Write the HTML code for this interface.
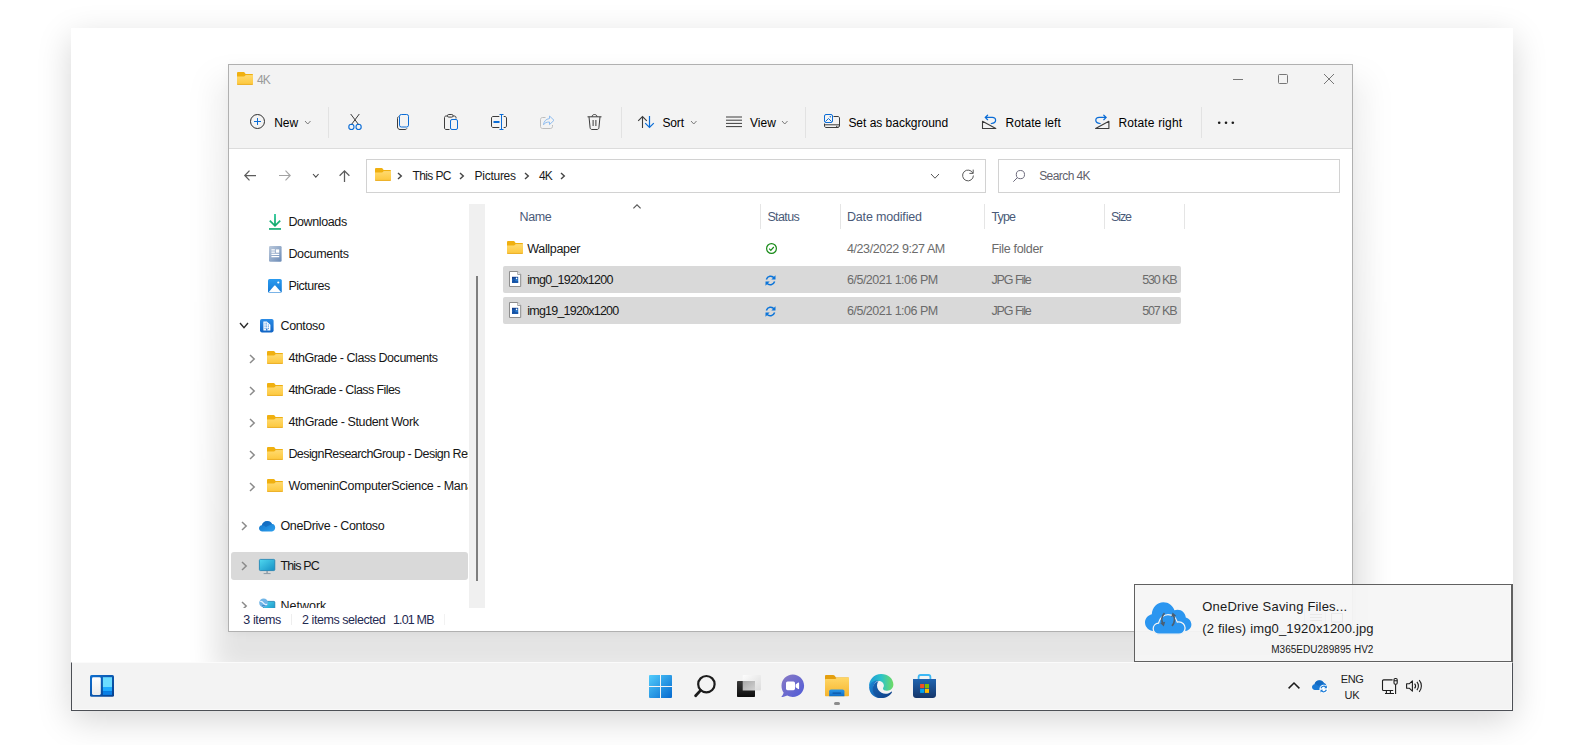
<!DOCTYPE html>
<html lang="en"><head><meta charset="utf-8"><title>4K - File Explorer</title>
<style>
html,body{margin:0;padding:0;background:#fff;}
body{width:1580px;height:745px;position:relative;overflow:hidden;font-family:"Liberation Sans",sans-serif;}
.t{position:absolute;white-space:pre;}
svg{overflow:visible}
</style></head><body>
<div style="position:absolute;left:71px;top:28px;width:1442px;height:682px;background:#fff;box-shadow:0 10px 32px rgba(0,0,0,0.17);"></div>
<div style="position:absolute;left:108px;top:0;width:1365px;height:745px;-webkit-mask-image:linear-gradient(to bottom,rgba(0,0,0,0.5) 64px,#000 540px);mask-image:linear-gradient(to bottom,rgba(0,0,0,0.5) 64px,#000 540px);"><div style="position:absolute;left:120px;top:64px;width:1125px;height:568px;box-shadow:0 28px 26px 14px rgba(0,0,0,0.11), 0 0 12px rgba(0,0,0,0.06);"></div></div>
<div style="position:absolute;left:228px;top:64px;width:1125px;height:568px;background:#fff;"></div>
<div style="position:absolute;left:228px;top:64px;width:1125px;height:568px;box-sizing:border-box;border:1px solid #b0b0b0;z-index:5;pointer-events:none;"></div>
<div style="position:absolute;left:229px;top:65px;width:1123px;height:83px;background:#f3f3f3;"></div>
<div style="position:absolute;left:229px;top:148px;width:1123px;height:1px;background:#dcdcdc;"></div>
<svg style="position:absolute;left:237px;top:72px;" width="16" height="13" viewBox="0 0 16 13"><defs><linearGradient id="gf1" x1="0" y1="0" x2="0" y2="1"><stop offset="0" stop-color="#ffe79c"/><stop offset=".1" stop-color="#ffd869"/><stop offset=".84" stop-color="#fdca43"/><stop offset=".9" stop-color="#edb22b"/><stop offset="1" stop-color="#edb22b"/></linearGradient></defs><path d="M1.200 0H6.600c.5 0 .9.300 1.200.7L8.600 2.100H15c.6 0 1 .4 1 1V7H0V1.200C0 .5.500 0 1.200 0z" fill="#f0b010"/><path d="M0 4.400H6.800c.5 0 .9-.2 1.200-.5l.3-.3c.3-.3.700-.4 1.100-.4H16V12c0 .6-.4 1-1 1H1c-.6 0-1-.4-1-1z" fill="url(#gf1)"/></svg>
<span class="t" style="left:257px;top:73.00px;font-size:12px;line-height:14px;color:#9a9a9a;font-weight:400;letter-spacing:-0.84px;">4K</span>
<svg style="position:absolute;left:1233px;top:79px;" width="10" height="1" viewBox="0 0 10 1"><rect width="10" height="1" fill="#777"/></svg>
<svg style="position:absolute;left:1278px;top:74px;" width="10" height="10" viewBox="0 0 10 10"><rect x=".5" y=".5" width="9" height="9" rx="1" fill="none" stroke="#777"/></svg>
<svg style="position:absolute;left:1324px;top:74px;" width="10" height="10" viewBox="0 0 10 10"><path d="M0 0L10 10M10 0L0 10" stroke="#777" stroke-width="1" fill="none"/></svg>
<svg style="position:absolute;left:250px;top:114px;" width="15" height="15" viewBox="0 0 15 15"><circle cx="7.5" cy="7.5" r="7" fill="none" stroke="#2e2e2e" stroke-width="1"/><path d="M4 7.5h7M7.5 4v7" stroke="#0a6cd6" stroke-width="1" fill="none"/></svg>
<span class="t" style="left:274.3px;top:116.00px;font-size:12px;line-height:14px;color:#000;font-weight:400;letter-spacing:-0.11px;">New</span>
<svg style="position:absolute;left:305.25px;top:120.5px;" width="5.5" height="3" viewBox="0 0 5.5 3"><path d="M0 0L2.75 3L5.5 0" fill="none" stroke="#7a7a7a" stroke-width="1"/></svg>
<div style="position:absolute;left:328px;top:107px;width:1px;height:31px;background:#e2e2e2;"></div>
<svg style="position:absolute;left:348px;top:114px;" width="14" height="16" viewBox="0 0 14 16"><path d="M2.700 0L10.900 11M11.300 0L3.100 11" stroke="#3c3c3c" stroke-width="1" fill="none"/><circle cx="3.400" cy="12.900" r="2.600" fill="none" stroke="#0a6cd6" stroke-width="1.100"/><circle cx="10.600" cy="12.900" r="2.600" fill="none" stroke="#0a6cd6" stroke-width="1.100"/></svg>
<svg style="position:absolute;left:397px;top:114px;" width="12" height="16" viewBox="0 0 12 16"><path d="M1.6 2.6C.9 2.9.5 3.500.5 4.300V13c0 1.400 1.100 2.500 2.500 2.500H8.200c.8 0 1.400-.4 1.700-1.100" fill="none" stroke="#3c3c3c" stroke-width="1"/><rect x="2.500" y=".5" width="9" height="12.500" rx="1.800" fill="none" stroke="#0a6cd6" stroke-width="1"/></svg>
<svg style="position:absolute;left:444px;top:114px;" width="14" height="16" viewBox="0 0 14 16"><path d="M5.500 15.500H2c-.8 0-1.500-.7-1.500-1.500V3.500C.5 2.700 1.200 2 2 2h1.500M9 2h1.500c.8 0 1.500.7 1.500 1.500V4.500" fill="none" stroke="#3c3c3c" stroke-width="1"/><rect x="3.500" y=".5" width="5.500" height="2.600" rx="1.200" fill="none" stroke="#3c3c3c" stroke-width="1"/><rect x="6.500" y="5.500" width="7" height="10" rx="1.500" fill="none" stroke="#0a6cd6" stroke-width="1"/></svg>
<svg style="position:absolute;left:491px;top:114px;" width="16" height="16" viewBox="0 0 16 16"><path d="M8.300 2.500H2C1.200 2.500.5 3.200.5 4v8c0 .8.700 1.500 1.500 1.500h6.300M12.700 2.500H14c.8 0 1.500.7 1.500 1.500v8c0 .8-.7 1.500-1.500 1.500h-1.300" fill="none" stroke="#3c3c3c" stroke-width="1"/><path d="M8.500.5h4M8.500 15.500h4M10.500.5v15" stroke="#0a6cd6" stroke-width="1" fill="none"/><rect x="2.500" y="7" width="6" height="2" fill="#0a6cd6"/></svg>
<svg style="position:absolute;left:540px;top:115px;" width="15" height="14" viewBox="0 0 15 14"><path d="M5.500 2.500H2.500C1.400 2.500.5 3.400.5 4.500v7c0 1.100.9 2 2 2h8c1.100 0 2-.9 2-2v-1.500" fill="none" stroke="#bdbdbd" stroke-width="1"/><path d="M9.500 1L14 5.300 9.500 9.600V7C6.500 7 4.800 7.800 3.500 9.800 3.900 6.300 5.800 4 9.500 3.600z" fill="none" stroke="#8fbdf0" stroke-width="1" stroke-linejoin="round"/></svg>
<svg style="position:absolute;left:587px;top:114px;" width="15" height="16" viewBox="0 0 15 16"><path d="M.5 2.800h14M5 2.800C5 1.500 6 .5 7.500.5S10 1.500 10 2.800M2 2.800l1.100 11c.1.900.8 1.700 1.800 1.700h5.200c1 0 1.700-.8 1.800-1.700L13 2.800M6.100 6v6M8.900 6v6" fill="none" stroke="#3c3c3c" stroke-width="1"/></svg>
<div style="position:absolute;left:621px;top:107px;width:1px;height:31px;background:#e2e2e2;"></div>
<svg style="position:absolute;left:637px;top:116px;" width="18" height="13" viewBox="0 0 18 13"><path d="M5.500 12V.5M1.200 4.800L5.500 .5l4.300 4.300" fill="none" stroke="#3c3c3c" stroke-width="1.100"/><path d="M12.500 0v11.500M8.200 7.200l4.300 4.300 4.300-4.300" fill="none" stroke="#0a6cd6" stroke-width="1.200"/></svg>
<span class="t" style="left:662.4px;top:116.00px;font-size:12px;line-height:14px;color:#000;font-weight:400;letter-spacing:-0.1px;">Sort</span>
<svg style="position:absolute;left:691.45px;top:120.5px;" width="5.5" height="3" viewBox="0 0 5.5 3"><path d="M0 0L2.75 3L5.5 0" fill="none" stroke="#7a7a7a" stroke-width="1"/></svg>
<svg style="position:absolute;left:726px;top:116px;" width="16" height="12" viewBox="0 0 16 12"><path d="M0 1h16M0 4.200h16M0 7.400h16M0 10.600h16" stroke="#3c3c3c" stroke-width="1" fill="none"/></svg>
<span class="t" style="left:750px;top:116.00px;font-size:12px;line-height:14px;color:#000;font-weight:400;letter-spacing:0.0px;">View</span>
<svg style="position:absolute;left:782.45px;top:120.5px;" width="5.5" height="3" viewBox="0 0 5.5 3"><path d="M0 0L2.75 3L5.5 0" fill="none" stroke="#7a7a7a" stroke-width="1"/></svg>
<div style="position:absolute;left:805px;top:107px;width:1px;height:31px;background:#e2e2e2;"></div>
<svg style="position:absolute;left:824px;top:114px;" width="16" height="14" viewBox="0 0 16 14"><path d="M9.500 2.500H14c.8 0 1.500.7 1.500 1.500v8c0 .8-.7 1.500-1.500 1.500H2c-.8 0-1.500-.7-1.500-1.500V9.500M.5 10.800h15" fill="none" stroke="#3c3c3c" stroke-width="1"/><rect x=".5" y=".5" width="8" height="8" rx="1.500" fill="none" stroke="#0a6cd6" stroke-width="1"/><path d="M1.500 7.500L4.500 4.500l3 3" fill="none" stroke="#0a6cd6" stroke-width="1"/><circle cx="6.300" cy="2.700" r=".7" fill="#0a6cd6"/><rect x="12" y="11.800" width="1" height="1" fill="#3c3c3c"/><rect x="13.600" y="11.800" width="1" height="1" fill="#3c3c3c"/></svg>
<span class="t" style="left:848.4px;top:116.00px;font-size:12px;line-height:14px;color:#000;font-weight:400;letter-spacing:-0.02px;">Set as background</span>
<svg style="position:absolute;left:982px;top:115px;" width="15" height="14" viewBox="0 0 15 14"><path d="M.5 13.500V6.300L13.800 13.500z" fill="none" stroke="#3c3c3c" stroke-width="1.100" stroke-linejoin="round"/><path d="M5.600 .2L3.200 2.400l2.400 2.300M3.200 2.400h7c2 0 3.400 1.300 3.400 2.900 0 1.700-1.800 3-4.300 3.200" fill="none" stroke="#0a6cd6" stroke-width="1.250" stroke-linecap="round" stroke-linejoin="round"/></svg>
<span class="t" style="left:1005.6px;top:116.00px;font-size:12px;line-height:14px;color:#000;font-weight:400;letter-spacing:0.05px;">Rotate left</span>
<svg style="position:absolute;left:1094px;top:115px;" width="15" height="14" viewBox="0 0 15 14"><g transform="translate(15.400,0) scale(-1,1)"><path d="M.5 13.500V6.300L13.800 13.500z" fill="none" stroke="#3c3c3c" stroke-width="1.100" stroke-linejoin="round"/><path d="M5.600 .2L3.200 2.400l2.400 2.300M3.200 2.400h7c2 0 3.400 1.300 3.400 2.900 0 1.700-1.800 3-4.300 3.200" fill="none" stroke="#0a6cd6" stroke-width="1.250" stroke-linecap="round" stroke-linejoin="round"/></g></svg>
<span class="t" style="left:1118.4px;top:116.00px;font-size:12px;line-height:14px;color:#000;font-weight:400;letter-spacing:0.15px;">Rotate right</span>
<div style="position:absolute;left:1201px;top:107px;width:1px;height:31px;background:#e2e2e2;"></div>
<svg style="position:absolute;left:1217px;top:121px;" width="18" height="4" viewBox="0 0 18 4"><circle cx="2.200" cy="1.800" r="1.300" fill="#1a1a1a"/><circle cx="9" cy="1.800" r="1.300" fill="#1a1a1a"/><circle cx="15.800" cy="1.800" r="1.300" fill="#1a1a1a"/></svg>
<svg style="position:absolute;left:244px;top:170px;" width="12" height="11" viewBox="0 0 12 11"><path d="M12 5.500H1M5.500 .6L.8 5.500l4.700 4.900" fill="none" stroke="#5c5c5c" stroke-width="1.250"/></svg>
<svg style="position:absolute;left:279px;top:170px;" width="12" height="11" viewBox="0 0 12 11"><path d="M0 5.500h11M6.500 .6l4.700 4.900-4.700 4.900" fill="none" stroke="#a3a3a3" stroke-width="1.100"/></svg>
<svg style="position:absolute;left:312.7px;top:173.9px;" width="5.6" height="3.2" viewBox="0 0 5.6 3.2"><path d="M0 0L2.8 3.2L5.6 0" fill="none" stroke="#4a4a4a" stroke-width="1.1"/></svg>
<svg style="position:absolute;left:339px;top:170px;" width="11" height="12" viewBox="0 0 11 12"><path d="M5.500 12V1M.6 5.800L5.500 .9l4.900 4.900" fill="none" stroke="#5c5c5c" stroke-width="1.250"/></svg>
<div style="position:absolute;left:366px;top:159px;width:620px;height:34px;box-sizing:border-box;border:1px solid #d2d2d2;background:#fff;"></div>
<svg style="position:absolute;left:375px;top:168px;" width="16" height="13" viewBox="0 0 16 13"><defs><linearGradient id="gf2" x1="0" y1="0" x2="0" y2="1"><stop offset="0" stop-color="#ffe79c"/><stop offset=".1" stop-color="#ffd869"/><stop offset=".84" stop-color="#fdca43"/><stop offset=".9" stop-color="#edb22b"/><stop offset="1" stop-color="#edb22b"/></linearGradient></defs><path d="M1.200 0H6.600c.5 0 .9.300 1.200.7L8.600 2.100H15c.6 0 1 .4 1 1V7H0V1.200C0 .5.500 0 1.200 0z" fill="#f0b010"/><path d="M0 4.400H6.800c.5 0 .9-.2 1.200-.5l.3-.3c.3-.3.700-.4 1.100-.4H16V12c0 .6-.4 1-1 1H1c-.6 0-1-.4-1-1z" fill="url(#gf2)"/></svg>
<svg style="position:absolute;left:398.35px;top:173.4px;" width="3.3" height="6" viewBox="0 0 3.3 6"><path d="M0 0L3.3 3.0L0 6" fill="none" stroke="#444" stroke-width="1.4"/></svg>
<span class="t" style="left:412.6px;top:169.00px;font-size:12px;line-height:14px;color:#1a1a1a;font-weight:400;letter-spacing:-0.64px;">This PC</span>
<svg style="position:absolute;left:460.35px;top:173.4px;" width="3.3" height="6" viewBox="0 0 3.3 6"><path d="M0 0L3.3 3.0L0 6" fill="none" stroke="#444" stroke-width="1.4"/></svg>
<span class="t" style="left:474.5px;top:169.00px;font-size:12px;line-height:14px;color:#1a1a1a;font-weight:400;letter-spacing:-0.26px;">Pictures</span>
<svg style="position:absolute;left:525.45px;top:173.4px;" width="3.3" height="6" viewBox="0 0 3.3 6"><path d="M0 0L3.3 3.0L0 6" fill="none" stroke="#444" stroke-width="1.4"/></svg>
<span class="t" style="left:539px;top:169.00px;font-size:12px;line-height:14px;color:#1a1a1a;font-weight:400;letter-spacing:-0.84px;">4K</span>
<svg style="position:absolute;left:561.35px;top:173.4px;" width="3.3" height="6" viewBox="0 0 3.3 6"><path d="M0 0L3.3 3.0L0 6" fill="none" stroke="#444" stroke-width="1.4"/></svg>
<svg style="position:absolute;left:931.0px;top:173.5px;" width="8" height="4.2" viewBox="0 0 8 4.2"><path d="M0 0L4.0 4.2L8 0" fill="none" stroke="#555" stroke-width="1"/></svg>
<svg style="position:absolute;left:962px;top:169px;" width="12" height="12" viewBox="0 0 12 12"><path d="M10.900 4.200A5.400 5.400 0 1 0 11.400 6.500" fill="none" stroke="#5c5c5c" stroke-width="1"/><path d="M11.200 .6v3.800H7.400" fill="none" stroke="#5c5c5c" stroke-width="1"/></svg>
<div style="position:absolute;left:998px;top:159px;width:342px;height:34px;box-sizing:border-box;border:1px solid #d2d2d2;background:#fff;"></div>
<svg style="position:absolute;left:1013px;top:170px;" width="12" height="12" viewBox="0 0 12 12"><circle cx="7.400" cy="4.600" r="4.100" fill="none" stroke="#6c6a7c" stroke-width="1"/><path d="M4.500 7.500L.3 11.700" stroke="#6c6a7c" stroke-width="1"/></svg>
<span class="t" style="left:1039.2px;top:169.00px;font-size:12px;line-height:14px;color:#5f5f6b;font-weight:400;letter-spacing:-0.58px;">Search 4K</span>
<div style="position:absolute;left:231px;top:552px;width:237px;height:28px;background:#d9d9d9;border-radius:3px;"></div>
<div style="position:absolute;left:0;top:0;width:467.600px;height:607.5px;overflow:hidden;">
<svg style="position:absolute;left:269px;top:214px;" width="12" height="16" viewBox="0 0 12 16"><defs><linearGradient id="gdl" x1="0" y1="0" x2="0" y2="1"><stop offset="0" stop-color="#2bc79a"/><stop offset="1" stop-color="#13a86b"/></linearGradient></defs><path d="M6 0v11.600M.8 6.600L6 11.800l5.200-5.200" fill="none" stroke="url(#gdl)" stroke-width="1.800"/><rect x="0" y="14.100" width="12" height="1.700" fill="#17ad75"/></svg>
<span class="t" style="left:288.4px;top:215.00px;font-size:12.5px;line-height:14px;color:#161616;font-weight:400;letter-spacing:-0.38px;">Downloads</span>
<svg style="position:absolute;left:268.6px;top:246px;" width="13" height="16" viewBox="0 0 13 16"><defs><linearGradient id="gdoc" x1="0" y1="0" x2="1" y2="1"><stop offset="0" stop-color="#bccadc"/><stop offset="1" stop-color="#6a8ab6"/></linearGradient></defs><rect x="0" y="0" width="12.600" height="15.700" rx="1.200" fill="url(#gdoc)"/><rect x="6.900" y="3.400" width="3.300" height="3.300" fill="#fff"/><path d="M2.400 3.900h3.500M2.400 6.100h3.500M2.400 8.400h7.800M2.400 10.600h7.800" stroke="#fff" stroke-width="1.100"/></svg>
<span class="t" style="left:288.4px;top:247.00px;font-size:12.5px;line-height:14px;color:#161616;font-weight:400;letter-spacing:-0.34px;">Documents</span>
<svg style="position:absolute;left:268px;top:279.2px;" width="14" height="14" viewBox="0 0 14 14"><defs><linearGradient id="gpic" x1="0" y1="0" x2="0" y2="1"><stop offset="0" stop-color="#2a9bf0"/><stop offset="1" stop-color="#1479d4"/></linearGradient></defs><rect width="13.800" height="13.800" rx="1.600" fill="url(#gpic)"/><path d="M.6 13.200L6.200 6.800c.4-.4.900-.4 1.300 0l5.700 6.400z" fill="#fff"/><circle cx="10.300" cy="3.500" r="1.100" fill="#fff"/></svg>
<span class="t" style="left:288.4px;top:279.00px;font-size:12.5px;line-height:14px;color:#161616;font-weight:400;letter-spacing:-0.48px;">Pictures</span>
<svg style="position:absolute;left:239.8px;top:323.4px;" width="8" height="4.6" viewBox="0 0 8 4.6"><path d="M0 0L4.0 4.6L8 0" fill="none" stroke="#2b2b2b" stroke-width="1.4"/></svg>
<svg style="position:absolute;left:260.2px;top:319.3px;" width="14" height="14" viewBox="0 0 14 14"><defs><linearGradient id="gcon" x1="0" y1="0" x2="0" y2="1"><stop offset="0" stop-color="#2b8ce6"/><stop offset="1" stop-color="#0f63c4"/></linearGradient></defs><rect width="13.600" height="13.400" rx="1.800" fill="url(#gcon)"/><path d="M3.400 11.600V2.400h3.400l3.600 3.400v5.800z" fill="#fff"/><path d="M4.600 4.200h.9M6.200 4.200h.9M4.600 6h.9M6.200 6h.9M7.900 6h.9M4.600 7.800h.9M6.200 7.800h.9M7.900 7.800h.9M4.600 9.600h.9M7.900 9.600h.9" stroke="#1a74d6" stroke-width=".9"/><rect x="6.100" y="9.400" width="1.300" height="2.200" fill="#1a74d6"/></svg>
<span class="t" style="left:280.5px;top:319.00px;font-size:12.5px;line-height:14px;color:#161616;font-weight:400;letter-spacing:-0.37px;">Contoso</span>
<svg style="position:absolute;left:249.70000000000002px;top:354.5px;" width="4.2" height="8" viewBox="0 0 4.2 8"><path d="M0 0L4.2 4.0L0 8" fill="none" stroke="#8a8a8a" stroke-width="1.5"/></svg>
<svg style="position:absolute;left:267px;top:351.2px;" width="16" height="13" viewBox="0 0 16 13"><defs><linearGradient id="gf3" x1="0" y1="0" x2="0" y2="1"><stop offset="0" stop-color="#ffe79c"/><stop offset=".1" stop-color="#ffd869"/><stop offset=".84" stop-color="#fdca43"/><stop offset=".9" stop-color="#edb22b"/><stop offset="1" stop-color="#edb22b"/></linearGradient></defs><path d="M1.200 0H6.600c.5 0 .9.300 1.200.7L8.600 2.100H15c.6 0 1 .4 1 1V7H0V1.200C0 .5.500 0 1.200 0z" fill="#f0b010"/><path d="M0 4.400H6.800c.5 0 .9-.2 1.200-.5l.3-.3c.3-.3.700-.4 1.100-.4H16V12c0 .6-.4 1-1 1H1c-.6 0-1-.4-1-1z" fill="url(#gf3)"/></svg>
<span class="t" style="left:288.4px;top:351.00px;font-size:12.5px;line-height:14px;color:#161616;font-weight:400;letter-spacing:-0.46px;">4thGrade - Class Documents</span>
<svg style="position:absolute;left:249.70000000000002px;top:386.5px;" width="4.2" height="8" viewBox="0 0 4.2 8"><path d="M0 0L4.2 4.0L0 8" fill="none" stroke="#8a8a8a" stroke-width="1.5"/></svg>
<svg style="position:absolute;left:267px;top:383.2px;" width="16" height="13" viewBox="0 0 16 13"><defs><linearGradient id="gf4" x1="0" y1="0" x2="0" y2="1"><stop offset="0" stop-color="#ffe79c"/><stop offset=".1" stop-color="#ffd869"/><stop offset=".84" stop-color="#fdca43"/><stop offset=".9" stop-color="#edb22b"/><stop offset="1" stop-color="#edb22b"/></linearGradient></defs><path d="M1.200 0H6.600c.5 0 .9.300 1.200.7L8.600 2.100H15c.6 0 1 .4 1 1V7H0V1.200C0 .5.500 0 1.200 0z" fill="#f0b010"/><path d="M0 4.400H6.800c.5 0 .9-.2 1.200-.5l.3-.3c.3-.3.700-.4 1.100-.4H16V12c0 .6-.4 1-1 1H1c-.6 0-1-.4-1-1z" fill="url(#gf4)"/></svg>
<span class="t" style="left:288.4px;top:383.00px;font-size:12.5px;line-height:14px;color:#161616;font-weight:400;letter-spacing:-0.58px;">4thGrade - Class Files</span>
<svg style="position:absolute;left:249.70000000000002px;top:418.5px;" width="4.2" height="8" viewBox="0 0 4.2 8"><path d="M0 0L4.2 4.0L0 8" fill="none" stroke="#8a8a8a" stroke-width="1.5"/></svg>
<svg style="position:absolute;left:267px;top:415.2px;" width="16" height="13" viewBox="0 0 16 13"><defs><linearGradient id="gf5" x1="0" y1="0" x2="0" y2="1"><stop offset="0" stop-color="#ffe79c"/><stop offset=".1" stop-color="#ffd869"/><stop offset=".84" stop-color="#fdca43"/><stop offset=".9" stop-color="#edb22b"/><stop offset="1" stop-color="#edb22b"/></linearGradient></defs><path d="M1.200 0H6.600c.5 0 .9.300 1.200.7L8.600 2.100H15c.6 0 1 .4 1 1V7H0V1.200C0 .5.500 0 1.200 0z" fill="#f0b010"/><path d="M0 4.400H6.800c.5 0 .9-.2 1.200-.5l.3-.3c.3-.3.700-.4 1.100-.4H16V12c0 .6-.4 1-1 1H1c-.6 0-1-.4-1-1z" fill="url(#gf5)"/></svg>
<span class="t" style="left:288.4px;top:415.00px;font-size:12.5px;line-height:14px;color:#161616;font-weight:400;letter-spacing:-0.37px;">4thGrade - Student Work</span>
<svg style="position:absolute;left:249.70000000000002px;top:450.5px;" width="4.2" height="8" viewBox="0 0 4.2 8"><path d="M0 0L4.2 4.0L0 8" fill="none" stroke="#8a8a8a" stroke-width="1.5"/></svg>
<svg style="position:absolute;left:267px;top:447.2px;" width="16" height="13" viewBox="0 0 16 13"><defs><linearGradient id="gf6" x1="0" y1="0" x2="0" y2="1"><stop offset="0" stop-color="#ffe79c"/><stop offset=".1" stop-color="#ffd869"/><stop offset=".84" stop-color="#fdca43"/><stop offset=".9" stop-color="#edb22b"/><stop offset="1" stop-color="#edb22b"/></linearGradient></defs><path d="M1.200 0H6.600c.5 0 .9.300 1.200.7L8.600 2.100H15c.6 0 1 .4 1 1V7H0V1.200C0 .5.500 0 1.200 0z" fill="#f0b010"/><path d="M0 4.400H6.800c.5 0 .9-.2 1.200-.5l.3-.3c.3-.3.700-.4 1.100-.4H16V12c0 .6-.4 1-1 1H1c-.6 0-1-.4-1-1z" fill="url(#gf6)"/></svg>
<span class="t" style="left:288.4px;top:447.00px;font-size:12.5px;line-height:14px;color:#161616;font-weight:400;letter-spacing:-0.57px;">DesignResearchGroup - Design Research</span>
<svg style="position:absolute;left:249.70000000000002px;top:482.5px;" width="4.2" height="8" viewBox="0 0 4.2 8"><path d="M0 0L4.2 4.0L0 8" fill="none" stroke="#8a8a8a" stroke-width="1.5"/></svg>
<svg style="position:absolute;left:267px;top:479.2px;" width="16" height="13" viewBox="0 0 16 13"><defs><linearGradient id="gf7" x1="0" y1="0" x2="0" y2="1"><stop offset="0" stop-color="#ffe79c"/><stop offset=".1" stop-color="#ffd869"/><stop offset=".84" stop-color="#fdca43"/><stop offset=".9" stop-color="#edb22b"/><stop offset="1" stop-color="#edb22b"/></linearGradient></defs><path d="M1.200 0H6.600c.5 0 .9.300 1.200.7L8.600 2.100H15c.6 0 1 .4 1 1V7H0V1.200C0 .5.500 0 1.200 0z" fill="#f0b010"/><path d="M0 4.400H6.800c.5 0 .9-.2 1.200-.5l.3-.3c.3-.3.700-.4 1.100-.4H16V12c0 .6-.4 1-1 1H1c-.6 0-1-.4-1-1z" fill="url(#gf7)"/></svg>
<span class="t" style="left:288.4px;top:479.00px;font-size:12.5px;line-height:14px;color:#161616;font-weight:400;letter-spacing:-0.31px;">WomeninComputerScience - Management</span>
<svg style="position:absolute;left:241.70000000000002px;top:522.3000000000001px;" width="4.2" height="8" viewBox="0 0 4.2 8"><path d="M0 0L4.2 4.0L0 8" fill="none" stroke="#8a8a8a" stroke-width="1.5"/></svg>
<svg style="position:absolute;left:258.8px;top:520.6px;" width="16.2" height="10.6" viewBox="0 0 16.2 10.6"><defs><linearGradient id="god" x1="0" y1="0" x2="1" y2="1"><stop offset="0" stop-color="#1272c8"/><stop offset="1" stop-color="#2da0ee"/></linearGradient></defs><path d="M3.400 10.500C1.500 10.500 0 9.100 0 7.300 0 5.700 1.200 4.400 2.800 4.200 3.500 1.800 5.600 0 8.200 0c2.200 0 4 1.200 4.900 3 .1 0 .200 0 .3 0 1.600 0 2.800 1.500 2.800 3.600 0 2.200-1.400 3.900-3.200 3.900z" fill="url(#god)"/><path d="M2.800 4.200C4.500 4 6 4.800 6.900 6.100L13.100 3c-.9-1.800-2.700-3-4.900-3C5.600 0 3.500 1.800 2.800 4.200z" fill="#0f5fb4" opacity=".55"/></svg>
<span class="t" style="left:280.5px;top:519.00px;font-size:12.5px;line-height:14px;color:#161616;font-weight:400;letter-spacing:-0.37px;">OneDrive - Contoso</span>
<svg style="position:absolute;left:241.70000000000002px;top:562.3000000000001px;" width="4.2" height="8" viewBox="0 0 4.2 8"><path d="M0 0L4.2 4.0L0 8" fill="none" stroke="#8a8a8a" stroke-width="1.5"/></svg>
<svg style="position:absolute;left:258.8px;top:558.7px;" width="16.2" height="15.2" viewBox="0 0 16.2 15.2"><defs><linearGradient id="gpc" x1="0" y1="0" x2="1" y2="1"><stop offset="0" stop-color="#4fd8f0"/><stop offset="1" stop-color="#158fc4"/></linearGradient></defs><rect x=".4" y=".4" width="15.400" height="11.200" rx="1" fill="url(#gpc)" stroke="#1a7eae" stroke-width=".8"/><rect x="7.400" y="12" width="1.400" height="2.200" fill="#8c9aa6"/><rect x="4.600" y="14.100" width="7" height="1" fill="#8c9aa6"/></svg>
<span class="t" style="left:280.5px;top:559.00px;font-size:12.5px;line-height:14px;color:#161616;font-weight:400;letter-spacing:-0.88px;">This PC</span>
<svg style="position:absolute;left:241.70000000000002px;top:602.3000000000001px;" width="4.2" height="8" viewBox="0 0 4.2 8"><path d="M0 0L4.2 4.0L0 8" fill="none" stroke="#8a8a8a" stroke-width="1.5"/></svg>
<svg style="position:absolute;left:258.8px;top:597.6px;" width="16.2" height="15.2" viewBox="0 0 16.2 15.2"><rect x="4.400" y="3.400" width="11.400" height="9" rx=".8" fill="url(#gpc)" stroke="#1a7eae" stroke-width=".8"/><circle cx="4.600" cy="4.800" r="4.400" fill="#6fb4e6"/><path d="M1.200 3.500c1.500-.5 2.500.5 3.500 1.800s2.200 1.400 3.500 1" fill="none" stroke="#e8f4ff" stroke-width="1.200"/><path d="M3 8.300c.8-1 2.200-1 3.200-.2" fill="none" stroke="#2a7dc0" stroke-width="1"/></svg>
<span class="t" style="left:280.5px;top:599.00px;font-size:12.5px;line-height:14px;color:#161616;font-weight:400;letter-spacing:0px;">Network</span>
</div>
<div style="position:absolute;left:469px;top:204px;width:16px;height:403.5px;background:#f0f0f0;"></div>
<div style="position:absolute;left:476px;top:276px;width:2px;height:305px;background:#7e7e7e;"></div>
<span class="t" style="left:243.3px;top:613.00px;font-size:12.5px;line-height:14px;color:#1f2a52;font-weight:400;letter-spacing:-0.39px;">3 items</span>
<div style="position:absolute;left:291px;top:614px;width:1px;height:11px;background:#eeeeee;"></div>
<span class="t" style="left:302px;top:613.00px;font-size:12.5px;line-height:14px;color:#1f2a52;font-weight:400;letter-spacing:-0.44px;">2 items selected</span>
<span class="t" style="left:393px;top:613.00px;font-size:12.5px;line-height:14px;color:#1f2a52;font-weight:400;letter-spacing:-0.84px;">1.01 MB</span>
<div style="position:absolute;left:444px;top:614px;width:1px;height:11px;background:#f2f2f2;"></div>
<div style="position:absolute;left:1304px;top:608px;width:22px;height:18px;box-sizing:border-box;border:1px solid #9fb8d8;background:#e6eef8;border-radius:2px;"></div>
<svg style="position:absolute;left:1310px;top:614px;" width="12" height="8" viewBox="0 0 12 8"><path d="M0 .5h12M0 3.500h12M0 6.500h12" stroke="#444" stroke-width="1" fill="none"/></svg>
<svg style="position:absolute;left:1331px;top:613px;" width="12" height="10" viewBox="0 0 12 10"><rect x=".5" y=".5" width="11" height="8.500" fill="none" stroke="#444" stroke-width="1"/></svg>
<svg style="position:absolute;left:633px;top:204px;" width="8" height="5" viewBox="0 0 8 5"><path d="M.4 4.400L4 .8l3.600 3.600" fill="none" stroke="#5a5a5a" stroke-width="1.200"/></svg>
<div style="position:absolute;left:760px;top:204px;width:1px;height:25px;background:#e5e5e5;"></div>
<div style="position:absolute;left:840px;top:204px;width:1px;height:25px;background:#e5e5e5;"></div>
<div style="position:absolute;left:984px;top:204px;width:1px;height:25px;background:#e5e5e5;"></div>
<div style="position:absolute;left:1104px;top:204px;width:1px;height:25px;background:#e5e5e5;"></div>
<div style="position:absolute;left:1184px;top:204px;width:1px;height:25px;background:#e5e5e5;"></div>
<span class="t" style="left:519.6px;top:210.00px;font-size:12.5px;line-height:14px;color:#4a5a78;font-weight:400;letter-spacing:-0.44px;">Name</span>
<span class="t" style="left:767.4px;top:210.00px;font-size:12.5px;line-height:14px;color:#4a5a78;font-weight:400;letter-spacing:-0.61px;">Status</span>
<span class="t" style="left:847px;top:210.00px;font-size:12.5px;line-height:14px;color:#4a5a78;font-weight:400;letter-spacing:-0.18px;">Date modified</span>
<span class="t" style="left:991.4px;top:210.00px;font-size:12.5px;line-height:14px;color:#4a5a78;font-weight:400;letter-spacing:-0.83px;">Type</span>
<span class="t" style="left:1111px;top:210.00px;font-size:12.5px;line-height:14px;color:#4a5a78;font-weight:400;letter-spacing:-1.08px;">Size</span>
<div style="position:absolute;left:503px;top:266px;width:678px;height:27px;background:#d9d9d9;border-radius:2px;"></div>
<div style="position:absolute;left:503px;top:297px;width:678px;height:27px;background:#d9d9d9;border-radius:2px;"></div>
<svg style="position:absolute;left:507px;top:241px;" width="16" height="13" viewBox="0 0 16 13"><defs><linearGradient id="gf8" x1="0" y1="0" x2="0" y2="1"><stop offset="0" stop-color="#ffe79c"/><stop offset=".1" stop-color="#ffd869"/><stop offset=".84" stop-color="#fdca43"/><stop offset=".9" stop-color="#edb22b"/><stop offset="1" stop-color="#edb22b"/></linearGradient></defs><path d="M1.200 0H6.600c.5 0 .9.300 1.200.7L8.600 2.100H15c.6 0 1 .4 1 1V7H0V1.200C0 .5.500 0 1.200 0z" fill="#f0b010"/><path d="M0 4.400H6.800c.5 0 .9-.2 1.200-.5l.3-.3c.3-.3.700-.4 1.100-.4H16V12c0 .6-.4 1-1 1H1c-.6 0-1-.4-1-1z" fill="url(#gf8)"/></svg>
<span class="t" style="left:527.3px;top:242.00px;font-size:12.5px;line-height:14px;color:#161616;font-weight:400;letter-spacing:-0.33px;">Wallpaper</span>
<svg style="position:absolute;left:765.9px;top:242.9px;" width="11" height="11" viewBox="0 0 11 11"><circle cx="5.500" cy="5.500" r="4.900" fill="none" stroke="#178a17" stroke-width="1.200"/><path d="M3.200 5.700l1.600 1.600 3-3.300" fill="none" stroke="#178a17" stroke-width="1.200"/></svg>
<span class="t" style="left:847px;top:242.00px;font-size:12.5px;line-height:14px;color:#6b6b6b;font-weight:400;letter-spacing:-0.42px;">4/23/2022 9:27 AM</span>
<span class="t" style="left:991.4px;top:242.00px;font-size:12.5px;line-height:14px;color:#6b6b6b;font-weight:400;letter-spacing:-0.3px;">File folder</span>
<svg style="position:absolute;left:509px;top:271px;" width="12.2" height="16" viewBox="0 0 12.2 16"><defs><linearGradient id="gjp" x1="0" y1="0" x2=".3" y2="1"><stop offset="0" stop-color="#0e2f7c"/><stop offset="1" stop-color="#2f93ea"/></linearGradient></defs><path d="M.5 .5h8.200l3 3V15.500H.5z" fill="#fff" stroke="#8c8c8c" stroke-width="1"/><path d="M8.700 .5v3h3" fill="#f2f2f2" stroke="#8c8c8c" stroke-width=".8"/><rect x="3" y="5.800" width="6.200" height="6.200" fill="url(#gjp)"/><circle cx="7.600" cy="7.400" r=".8" fill="#fff"/><path d="M3 12V10.300l2-1.600 2 1.600 2.200-.6V12z" fill="#0f3f8f" opacity=".7"/></svg>
<span class="t" style="left:527.3px;top:273.00px;font-size:12.5px;line-height:14px;color:#161616;font-weight:400;letter-spacing:-0.76px;">img0_1920x1200</span>
<svg style="position:absolute;left:765.488px;top:274.588px;" width="11.024000000000001" height="11.024000000000001" viewBox="0 0 10.400 10.400"><path d="M1.300 4.200A4.200 4.200 0 0 1 8.700 2.900" fill="none" stroke="#0b74d9" stroke-width="1.400"/><path d="M9.900 .3v3.900H6z" fill="#0b74d9"/><path d="M9.100 6.200A4.200 4.200 0 0 1 1.700 7.500" fill="none" stroke="#0b74d9" stroke-width="1.400"/><path d="M.5 10.100V6.200h3.900z" fill="#0b74d9"/></svg>
<span class="t" style="left:847px;top:273.00px;font-size:12.5px;line-height:14px;color:#6b6b6b;font-weight:400;letter-spacing:-0.5px;">6/5/2021 1:06 PM</span>
<span class="t" style="left:991.4px;top:273.00px;font-size:12.5px;line-height:14px;color:#6b6b6b;font-weight:400;letter-spacing:-1.07px;">JPG File</span>
<span class="t" style="right:403.4000000000001px;top:273.00px;font-size:12.5px;line-height:14px;color:#6b6b6b;font-weight:400;letter-spacing:-1.09px;">530 KB</span>
<svg style="position:absolute;left:509px;top:302px;" width="12.2" height="16" viewBox="0 0 12.2 16"><defs><linearGradient id="gjp" x1="0" y1="0" x2=".3" y2="1"><stop offset="0" stop-color="#0e2f7c"/><stop offset="1" stop-color="#2f93ea"/></linearGradient></defs><path d="M.5 .5h8.200l3 3V15.500H.5z" fill="#fff" stroke="#8c8c8c" stroke-width="1"/><path d="M8.700 .5v3h3" fill="#f2f2f2" stroke="#8c8c8c" stroke-width=".8"/><rect x="3" y="5.800" width="6.200" height="6.200" fill="url(#gjp)"/><circle cx="7.600" cy="7.400" r=".8" fill="#fff"/><path d="M3 12V10.300l2-1.600 2 1.600 2.200-.6V12z" fill="#0f3f8f" opacity=".7"/></svg>
<span class="t" style="left:527.3px;top:304.00px;font-size:12.5px;line-height:14px;color:#161616;font-weight:400;letter-spacing:-0.78px;">img19_1920x1200</span>
<svg style="position:absolute;left:765.488px;top:305.588px;" width="11.024000000000001" height="11.024000000000001" viewBox="0 0 10.400 10.400"><path d="M1.300 4.200A4.200 4.200 0 0 1 8.700 2.900" fill="none" stroke="#0b74d9" stroke-width="1.400"/><path d="M9.900 .3v3.900H6z" fill="#0b74d9"/><path d="M9.100 6.200A4.200 4.200 0 0 1 1.700 7.500" fill="none" stroke="#0b74d9" stroke-width="1.400"/><path d="M.5 10.100V6.200h3.900z" fill="#0b74d9"/></svg>
<span class="t" style="left:847px;top:304.00px;font-size:12.5px;line-height:14px;color:#6b6b6b;font-weight:400;letter-spacing:-0.5px;">6/5/2021 1:06 PM</span>
<span class="t" style="left:991.4px;top:304.00px;font-size:12.5px;line-height:14px;color:#6b6b6b;font-weight:400;letter-spacing:-1.07px;">JPG File</span>
<span class="t" style="right:403.4000000000001px;top:304.00px;font-size:12.5px;line-height:14px;color:#6b6b6b;font-weight:400;letter-spacing:-1.09px;">507 KB</span>
<div style="position:absolute;left:71px;top:662px;width:1442px;height:49px;background:#f3f3f3;box-sizing:border-box;border:1px solid #4c4f55;border-top:1px solid #fbfbfb;box-shadow:inset -1px -1px 0 #fafafa;z-index:8;"></div>
<div style="position:absolute;left:0;top:0;z-index:9;">
<svg style="position:absolute;left:90px;top:675px;" width="24" height="22" viewBox="0 0 24 22"><defs><linearGradient id="gw" x1="0" y1="0" x2="1" y2="1"><stop offset="0" stop-color="#0f6fd0"/><stop offset="1" stop-color="#07408e"/></linearGradient><linearGradient id="gww" x1="0" y1="0" x2="0" y2="1"><stop offset="0" stop-color="#fff"/><stop offset="1" stop-color="#ebebeb"/></linearGradient></defs><rect width="24" height="21.800" rx="1.600" fill="url(#gw)"/><rect x="2" y="2.200" width="8.800" height="17.700" rx="1.300" fill="url(#gww)"/><rect x="12.900" y="2.200" width="9.100" height="9.800" fill="#6cdcff"/><rect x="12.900" y="12" width="9.100" height="4.100" fill="#1eaaff"/><rect x="12.900" y="16.100" width="9.100" height="3.800" fill="#0a80e6"/></svg>
<svg style="position:absolute;left:649px;top:675px;" width="23" height="23" viewBox="0 0 23 23"><defs><linearGradient id="gwin" x1="0" y1="0" x2="1" y2="1"><stop offset="0" stop-color="#52cdfc"/><stop offset="1" stop-color="#0569cf"/></linearGradient></defs><path d="M1 0h10v11H0V1a1 1 0 0 1 1-1zM12 0h10a1 1 0 0 1 1 1v10H12zM0 12h11v11H1a1 1 0 0 1-1-1zM12 12h11v10a1 1 0 0 1-1 1H12z" fill="url(#gwin)"/></svg>
<svg style="position:absolute;left:694px;top:674px;" width="23" height="24" viewBox="0 0 23 24"><circle cx="12.400" cy="10.200" r="8.200" fill="none" stroke="#1c1c1c" stroke-width="2.200"/><path d="M6.600 16.400L1.600 21.800" stroke="#1c1c1c" stroke-width="2.800" stroke-linecap="round"/></svg>
<svg style="position:absolute;left:737px;top:675px;" width="24" height="22" viewBox="0 0 24 22"><defs><linearGradient id="gtv1" x1="0" y1="0" x2="1" y2="1"><stop offset="0" stop-color="#fdfdfd"/><stop offset="1" stop-color="#dadada"/></linearGradient><linearGradient id="gtv2" x1="0" y1="0" x2="0" y2="1"><stop offset="0" stop-color="#3a3a3a"/><stop offset="1" stop-color="#0c0c0c"/></linearGradient><linearGradient id="gtv3" x1="0" y1="0" x2="1" y2="1"><stop offset="0" stop-color="#a8a8a8"/><stop offset="1" stop-color="#d2d2d2"/></linearGradient></defs><rect x="5.700" y="0" width="18.200" height="15.500" rx=".8" fill="url(#gtv1)"/><rect x="0" y="6" width="18" height="16" rx=".8" fill="url(#gtv2)"/><rect x="5.700" y="6" width="12.300" height="9.500" fill="url(#gtv3)"/></svg>
<svg style="position:absolute;left:781px;top:674px;" width="24" height="24" viewBox="0 0 24 24"><defs><linearGradient id="gch" x1="0" y1="0" x2="1" y2="1"><stop offset="0" stop-color="#8a7bc4"/><stop offset="1" stop-color="#4f5bd8"/></linearGradient></defs><path d="M11.800 .5C18.100 .5 23.100 5.500 23.100 11.700S18.100 22.900 11.800 22.900c-2.100 0-4-.5-5.600-1.400-1.600.9-3.800 1.500-6 1.500 1.300-1.300 2.100-2.900 2.400-4.400C1.300 16.700.5 14.300.5 11.700.5 5.500 5.500 .5 11.800 .5z" fill="url(#gch)"/><rect x="5" y="7.400" width="9" height="8.800" rx="1.600" fill="#fff"/><path d="M14.600 10.400l2.600-1.900c.4-.3.900 0 .9.500v5.600c0 .5-.5.800-.9.500l-2.600-1.900z" fill="#fff"/></svg>
<svg style="position:absolute;left:825px;top:675px;" width="24" height="22" viewBox="0 0 24 22"><defs><linearGradient id="gfe" x1="0" y1="0" x2="0" y2="1"><stop offset="0" stop-color="#ffd766"/><stop offset="1" stop-color="#f6b52e"/></linearGradient><linearGradient id="gfb" x1="0" y1="0" x2="0" y2="1"><stop offset="0" stop-color="#2a97e8"/><stop offset="1" stop-color="#0f6ec8"/></linearGradient></defs><path d="M1.200 0h7c.5 0 1 .2 1.300.6L11 2.400h12c.6 0 1 .4 1 1V8H0V1.200C0 .5.500 0 1.200 0z" fill="#e49f0e"/><path d="M0 5c0-.6.400-1 1-1h8.600c.5 0 1-.2 1.400-.6l.4-.4c.4-.4.900-.6 1.400-.6H23c.6 0 1 .4 1 1v16.800c0 .6-.4 1-1 1H1c-.6 0-1-.4-1-1z" fill="url(#gfe)"/><path d="M4.200 21.200v-5c0-1 .8-1.800 1.800-1.800h11.600c1 0 1.800.8 1.800 1.800v5z" fill="url(#gfb)"/><rect x="7.400" y="17.400" width="8.800" height="1.400" rx=".7" fill="#0c56a6"/></svg>
<div style="position:absolute;left:834px;top:702px;width:6px;height:3px;background:#8c8c8c;border-radius:1.5px;"></div>
<svg style="position:absolute;left:869px;top:674px;" width="24.4" height="24" viewBox="0 0 24.4 24"><defs><linearGradient id="ge1" x1="0" y1="0" x2="1" y2="0"><stop offset="0" stop-color="#1d9ad8"/><stop offset=".5" stop-color="#2cc3c9"/><stop offset="1" stop-color="#6fdb62"/></linearGradient><linearGradient id="ge2" x1="0" y1="0" x2="1" y2="1"><stop offset="0" stop-color="#1b88d6"/><stop offset="1" stop-color="#1458a8"/></linearGradient><linearGradient id="ge3" x1="0" y1="0" x2="1" y2="1"><stop offset="0" stop-color="#1766b6"/><stop offset="1" stop-color="#0f3f86"/></linearGradient></defs><path d="M12.200 0C19 0 24.400 4.600 24.400 10.600c0 3.600-2.900 6.200-6.400 6.200-2.400 0-4-1-4-2.300 0-.9.900-1.300.9-2.900 0-2.600-2.400-4.600-5.300-4.600C5 7 1.600 9.400 .1 13.200-.6 6.200 4.800 0 12.200 0z" fill="url(#ge1)"/><path d="M.1 13.200C1 8.200 5.200 6 9.200 6.600c-3 1.200-4.800 4.200-4.800 7.400 0 5 4 9 9.400 9.800C6.600 25.200.3 20.400.1 13.200z" fill="url(#ge2)"/><path d="M9.600 7c-2 2.400-2.200 6 -.2 9 2.200 3.300 6.600 4.800 10.400 3.200 1-.4 1.900-1 2.500-1.500.4-.3.900.2.600.7-2 3.400-5.800 5.600-10.200 5.600-5 0-9-3.600-9-8.800C3.700 11.500 6 8 9.600 7z" fill="url(#ge3)"/></svg>
<svg style="position:absolute;left:913px;top:674px;" width="23" height="24" viewBox="0 0 23 24"><defs><linearGradient id="gst" x1="0" y1="0" x2="0" y2="1"><stop offset="0" stop-color="#1f64b0"/><stop offset="1" stop-color="#15366a"/></linearGradient></defs><path d="M5.600 6V3c0-1.100.9-2 2-2h7.800c1.100 0 2 .9 2 2v3" fill="none" stroke="#3db8f5" stroke-width="1.800"/><path d="M0 4.900h23v16c0 1.700-1.400 3.100-3.100 3.100H3.100C1.400 24 0 22.600 0 20.900z" fill="url(#gst)"/><rect x="7.100" y="10" width="4.100" height="4.100" fill="#f25022"/><rect x="11.900" y="10" width="4.100" height="4.100" fill="#7fba00"/><rect x="7.100" y="14.800" width="4.100" height="4.100" fill="#00a4ef"/><rect x="11.900" y="14.800" width="4.100" height="4.100" fill="#ffb900"/></svg>
<svg style="position:absolute;left:1288px;top:682px;" width="12" height="7" viewBox="0 0 12 7"><path d="M.6 6.400L6 1l5.400 5.400" fill="none" stroke="#1c1c1c" stroke-width="1.500"/></svg>
<svg style="position:absolute;left:1311.6px;top:680.4px;" width="16" height="14" viewBox="0 0 16 14"><path d="M3 10C1.300 10 0 8.700 0 7.100 0 5.600 1.100 4.400 2.500 4.200 3.100 1.800 5.100 .2 7.500 .2c2 0 3.700 1.100 4.500 2.800 1.300.1 2.300 1.300 2.300 2.900 0 2.300-1.300 4.100-3 4.100z" fill="#1a7ad6"/><path d="M2.500 4.200C4 4 5.400 4.700 6.300 5.900L12 3c-.8-1.700-2.500-2.800-4.500-2.800C5.100 .2 3.100 1.800 2.500 4.200z" fill="#0f5fb4" opacity=".6"/><circle cx="11.700" cy="9" r="4.300" fill="#fff"/><path d="M9 8.200A2.900 2.900 0 0 1 14 7.300" fill="none" stroke="#1a7ad6" stroke-width="1.200"/><path d="M14.900 5.600v2.700h-2.700z" fill="#1a7ad6"/><path d="M14.400 9.800A2.900 2.900 0 0 1 9.400 10.700" fill="none" stroke="#1a7ad6" stroke-width="1.200"/><path d="M8.500 12.400V9.700h2.700z" fill="#1a7ad6"/></svg>
<span class="t" style="left:1340.8px;top:673.00px;font-size:11px;line-height:12px;color:#1c1c1c;font-weight:400;letter-spacing:-0.41px;">ENG</span>
<span class="t" style="left:1344.6px;top:689.00px;font-size:11px;line-height:12px;color:#1c1c1c;font-weight:400;letter-spacing:-0.24px;">UK</span>
<svg style="position:absolute;left:1382px;top:677.6px;" width="16" height="16.4" viewBox="0 0 16 16.4"><path d="M10.600 1.900H1.600c-.6 0-1.100.5-1.100 1.100v8.400c0 .6.500 1.100 1.100 1.100h9.600" fill="none" stroke="#1c1c1c" stroke-width="1.100"/><path d="M4.400 12.500v3M8.400 12.500v3M3 15.500h9" fill="none" stroke="#1c1c1c" stroke-width="1.100"/><rect x="12" y=".5" width="3.200" height="5.800" rx="1.200" fill="none" stroke="#1c1c1c" stroke-width="1.100"/><path d="M12 2.700h3.200M13.600 6.300v9.700" stroke="#1c1c1c" stroke-width="1.100" fill="none"/></svg>
<svg style="position:absolute;left:1406px;top:680px;" width="17" height="12" viewBox="0 0 17 12"><path d="M.6 3.800h2.600L6.400 .8v10.400L3.200 8.200H.6z" fill="none" stroke="#1c1c1c" stroke-width="1.100" stroke-linejoin="round"/><path d="M8.600 3.600c1.100 1.300 1.100 3.500 0 4.800M10.900 1.800c2 2.300 2 6.100 0 8.400M13.200 .2c2.900 3.300 2.900 8.300 0 11.600" fill="none" stroke="#1c1c1c" stroke-width="1.100"/></svg>
</div>
<div style="position:absolute;left:1134px;top:584px;width:379px;height:78px;background:rgba(245,245,245,0.93);box-sizing:border-box;border:1px solid #606060;border-right-width:2px;box-shadow:inset -1px 0 0 #fafafa;z-index:10;"></div>
<div style="position:absolute;left:0;top:0;z-index:11;">
<svg style="position:absolute;left:1145px;top:601.6px;" width="46.4" height="32.4" viewBox="0 0 46.4 32.4"><path d="M9.600 29.200C4.300 29.200 0 25.500 0 20.600c0-4 2.800-7.300 6.800-8.300C7.200 5.400 12 .2 18.400 .2c5.200 0 9.400 3.300 11 8.100 1-.4 2-.6 3.100-.6 4.500 0 8 3.400 8.300 7.800 3.200.9 5.600 3.700 5.600 7 0 3.900-3.300 6.700-7.200 6.700z" fill="#2b96f0"/><path d="M14.200 32.200c-3.400 0-6-2.400-6-5.500 0-2.900 2.300-5.200 5.300-5.500 1-5 5-8.500 9.500-8.500 4.400 0 8 3 9.300 7.400 .5-.1 1-.2 1.600-.2 3.500 0 6.200 2.700 6.200 6.100 0 3.500-2.700 6.200-6.200 6.200z" fill="#2b96f0" stroke="#f5f5f5" stroke-width="1.300"/><path d="M19.500 11.200c-3 3-3.400 7.600-1.200 11.300" fill="none" stroke="#4b5f73" stroke-width="1.800"/><path d="M15.200 21l3.600 3.400 1.400-4.700z" fill="#4b5f73"/><path d="M27 23.800c2.800-3 3.200-7.600 1-11.300" fill="none" stroke="#4b5f73" stroke-width="1.800"/><path d="M31.200 13.800l-3.600-3.400-1.400 4.700z" fill="#4b5f73"/></svg>
<span class="t" style="left:1202.3px;top:599.00px;font-size:13px;line-height:15px;color:#1a1a1a;font-weight:400;letter-spacing:0.2px;">OneDrive Saving Files...</span>
<span class="t" style="left:1202.3px;top:621.00px;font-size:13px;line-height:15px;color:#1a1a1a;font-weight:400;letter-spacing:0.16px;">(2 files) img0_1920x1200.jpg</span>
<span class="t" style="left:1271.2px;top:644.00px;font-size:10px;line-height:11px;color:#1a1a1a;font-weight:400;letter-spacing:0.03px;">M365EDU289895 HV2</span>
</div>
</body></html>
